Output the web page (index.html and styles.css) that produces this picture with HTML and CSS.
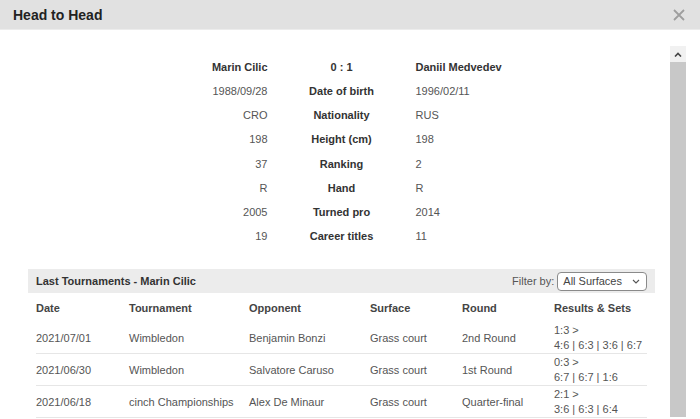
FILE: index.html
```html
<!DOCTYPE html>
<html>
<head>
<meta charset="utf-8">
<link rel="stylesheet" href="styles.css">
</head>
<body>
<div class="modal">
  <div class="header">
    <div class="title">Head to Head</div>
    <svg class="close" width="12" height="12" viewBox="0 0 12 12"><path d="M1 1 L11 11 M11 1 L1 11" stroke="#9e9e9e" stroke-width="1.8" fill="none"/></svg>
  </div>
  <div class="body">
    <div class="content">
      <div class="h2h">
        <div class="l b">Marin Cilic</div><div class="c b">0 : 1</div><div class="r b">Daniil Medvedev</div>
        <div class="l">1988/09/28</div><div class="c b">Date of birth</div><div class="r">1996/02/11</div>
        <div class="l">CRO</div><div class="c b">Nationality</div><div class="r">RUS</div>
        <div class="l">198</div><div class="c b">Height (cm)</div><div class="r">198</div>
        <div class="l">37</div><div class="c b">Ranking</div><div class="r">2</div>
        <div class="l">R</div><div class="c b">Hand</div><div class="r">R</div>
        <div class="l">2005</div><div class="c b">Turned pro</div><div class="r">2014</div>
        <div class="l">19</div><div class="c b">Career titles</div><div class="r">11</div>
      </div>
      <div class="section">
        <div class="bar">
          <div class="bar-title">Last Tournaments - Marin Cilic</div>
          <div class="filter">
            <span class="filter-label">Filter by:</span>
            <div class="select">All Surfaces
              <svg width="8" height="5" viewBox="0 0 8 5"><path d="M1 1 L4 4 L7 1" stroke="#555" stroke-width="1.1" fill="none"/></svg>
            </div>
          </div>
        </div>
        <table class="results">
          <thead>
            <tr><th class="c1">Date</th><th class="c2">Tournament</th><th class="c3">Opponent</th><th class="c4">Surface</th><th class="c5">Round</th><th class="c6">Results &amp; Sets</th></tr>
          </thead>
          <tbody>
            <tr><td>2021/07/01</td><td>Wimbledon</td><td>Benjamin Bonzi</td><td>Grass court</td><td>2nd Round</td><td class="res"><div>1:3 &gt;</div><div>4:6 | 6:3 | 3:6 | 6:7</div></td></tr>
            <tr><td>2021/06/30</td><td>Wimbledon</td><td>Salvatore Caruso</td><td>Grass court</td><td>1st Round</td><td class="res"><div>0:3 &gt;</div><div>6:7 | 6:7 | 1:6</div></td></tr>
            <tr><td>2021/06/18</td><td>cinch Championships</td><td>Alex De Minaur</td><td>Grass court</td><td>Quarter-final</td><td class="res"><div>2:1 &gt;</div><div>3:6 | 6:3 | 6:4</div></td></tr>
          </tbody>
        </table>
      </div>
    </div>
    <div class="scrollbar">
      <div class="sb-btn"><svg width="8" height="5" viewBox="0 0 8 5"><path d="M1 4.5 L4 1.5 L7 4.5" stroke="#444" stroke-width="1.6" fill="none"/></svg></div>
      <div class="sb-thumb"></div>
    </div>
  </div>
</div>
</body>
</html>
```
FILE: styles.css
```css
html, body {
  margin: 0;
  padding: 0;
  background: #fff;
  font-family: "Liberation Sans", Arial, sans-serif;
  font-size: 11px;
  color: #555;
}
.modal {
  width: 700px;
  height: 419px;
  overflow: hidden;
  display: flex;
  flex-direction: column;
}
.header {
  height: 29px;
  flex: none;
  background: #e1e1e1;
  border-bottom: 1px solid #ececec;
  display: flex;
  align-items: center;
  justify-content: space-between;
  padding: 0 15px 0 13px;
}
.title {
  font-size: 14px;
  font-weight: bold;
  color: #222;
}
.close { display: block; }
.body {
  flex: 1;
  display: flex;
  min-height: 0;
}
.content {
  flex: 1;
  padding: 25px 15px 0 28px;
}
.h2h {
  display: grid;
  grid-template-columns: 1fr 120px 1fr;
  grid-auto-rows: 24.15px;
  line-height: 24px;
}
.h2h .l { text-align: right; padding-right: 14px; }
.h2h .c { text-align: center; }
.h2h .r { text-align: left; padding-left: 14px; }
.b { font-weight: bold; color: #333; }
.section { margin-top: 21px; }
.bar {
  height: 24px;
  background: #ececec;
  display: flex;
  align-items: center;
  justify-content: space-between;
  padding: 0 8px;
}
.bar-title { font-weight: bold; color: #333; }
.filter { display: flex; align-items: center; gap: 3px; }
.filter-label { color: #555; }
.select {
  height: 17px;
  border: 1px solid #8a8a8a;
  border-radius: 4px;
  padding: 0 6px 0 5px;
  display: flex;
  align-items: center;
  gap: 10px;
  color: #444;
  background: #fff;
}
.results {
  border-collapse: collapse;
  margin: 0 8px;
  width: 611px;
  table-layout: fixed;
}
.results th {
  text-align: left;
  font-weight: bold;
  color: #444;
  height: 29px;
  padding: 0;
}
.c1 { width: 93px; }
.c2 { width: 120px; }
.c3 { width: 121px; }
.c4 { width: 92px; }
.c5 { width: 92px; }
.c6 { width: 93px; }
.results td {
  height: 31px;
  padding: 0;
  border-bottom: 1px solid #e6e6e6;
  white-space: nowrap;
}
.results td.res { line-height: 15px; }
.scrollbar {
  width: 16px;
  margin: 16px 14px 0 0;
  display: flex;
  flex-direction: column;
}
.sb-btn {
  height: 16px;
  background: #f1f1f1;
  display: flex;
  align-items: center;
  justify-content: center;
}
.sb-btn svg { display: block; }
.sb-thumb {
  flex: 1;
  background: #c8c8c8;
  margin-bottom: 2px;
}
```
